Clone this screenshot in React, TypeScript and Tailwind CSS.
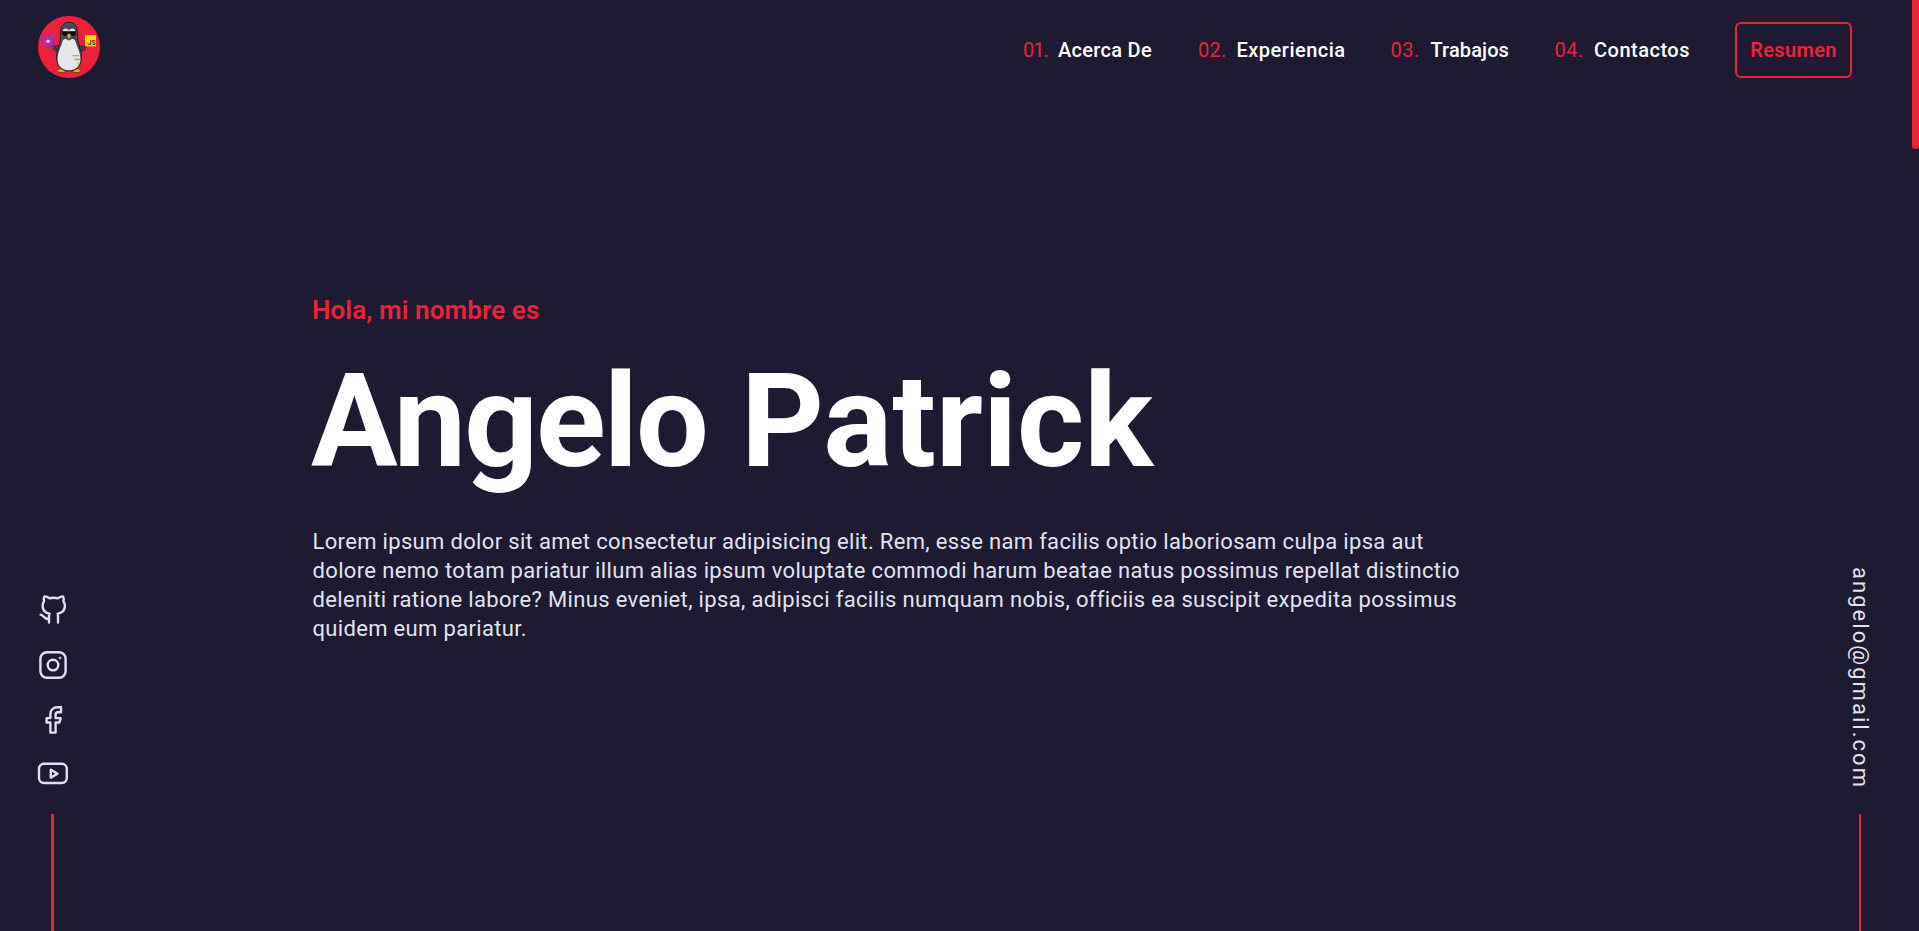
import React from "react";

const links = [
  { n: "01.", label: "Acerca De", num: "w-[36px] pl-px tracking-[-1px]", text: "tracking-[0.3px]" },
  { n: "02.", label: "Experiencia", num: "w-[38.5px] tracking-[0.3px]", text: "tracking-[0.5px]" },
  { n: "03.", label: "Trabajos", num: "w-[40px] tracking-[0.4px]", text: "tracking-[0.1px]" },
  { n: "04.", label: "Contactos", num: "w-[39.5px] tracking-[0.4px]", text: "tracking-[0.5px]" },
];

const paragraph = [
  { text: "Lorem ipsum dolor sit amet consectetur adipisicing elit. Rem, esse nam facilis optio laboriosam culpa ipsa aut", cls: "tracking-[0.333px]" },
  { text: "dolore nemo totam pariatur illum alias ipsum voluptate commodi harum beatae natus possimus repellat distinctio", cls: "tracking-[0.35px]" },
  { text: "deleniti ratione labore? Minus eveniet, ipsa, adipisci facilis numquam nobis, officiis ea suscipit expedita possimus", cls: "tracking-[0.342px]" },
  { text: "quidem eum pariatur.", cls: "tracking-[0.33px]" },
];

function Logo() {
  return (
    <svg className="h-[62px] w-[62px]" viewBox="0 0 62 62" fill="none">
      <circle cx="31" cy="31" r="31" fill="#ed213a" />
      <path d="M23 27C20 30.5 17 31 13.5 29.5L15.5 33.5C18.5 36 21 36 23 34.5Z" fill="#3f4147" stroke="#22232a" strokeWidth="0.8" />
      <path d="M39 27C42 30.5 45 31 48.5 29.5L47 33.5C44 36 41 36 39 34.5Z" fill="#3f4147" stroke="#22232a" strokeWidth="0.8" />
      <ellipse cx="23.6" cy="54.6" rx="4.4" ry="2" fill="#f5a524" stroke="#3b2a1a" strokeWidth="0.7" />
      <ellipse cx="38.4" cy="54.6" rx="4.4" ry="2" fill="#f5a524" stroke="#3b2a1a" strokeWidth="0.7" />
      <path d="M31 6.2C25.6 6.2 22.6 10.2 22.6 16C22.6 23 22 27 20.2 32C17 40 17.4 55 31 55C44.6 55 45 40 41.8 32C40 27 39.4 23 39.4 16C39.4 10.2 36.4 6.2 31 6.2Z" fill="#4a4c52" stroke="#22232a" strokeWidth="1" />
      <path d="M31 24.5C27.5 22 25.2 22.5 24.4 26C23.4 30 19.6 36 19.6 43C19.6 50.4 24 54.2 31 54.2C38 54.2 42.4 50.4 42.4 43C42.4 36 38.6 30 37.6 26C36.8 22.5 34.5 22 31 24.5Z" fill="#e7e7eb" />
      <path d="M24.5 15.8C25 11.8 29 11.6 31 14.5C33 11.6 37 11.8 37.5 15.8Z" fill="#e0e0e4" />
      <path d="M23.8 15.2H38.2L37.4 18.8C36 20.8 33.4 20.4 31.8 17.8H30.2C28.6 20.4 26 20.8 24.6 18.8Z" fill="#08080a" />
      <path d="M29 18.8L31 17.6L33 18.8L31.6 22.4H30.4Z" fill="#d9963a" />
      <g stroke="#8b35d6" strokeWidth="1.1">
        <ellipse cx="10" cy="25.3" rx="7.6" ry="3" />
        <ellipse cx="10" cy="25.3" rx="7.6" ry="3" transform="rotate(60 10 25.3)" />
        <ellipse cx="10" cy="25.3" rx="7.6" ry="3" transform="rotate(120 10 25.3)" />
      </g>
      <circle cx="10" cy="25.3" r="1.7" fill="#e9d8fb" />
      <rect x="47" y="19.2" width="11" height="11.2" fill="#fcd60a" />
      <text x="49.8" y="29.4" fontSize="6.8" fontWeight="700" fill="#3a3108" fontFamily="Roboto, sans-serif">JS</text>
      <path d="M34.5 39.7H41" stroke="#86a894" strokeWidth="1.2" />
      <path d="M36.5 43.4H42" stroke="#e8848a" strokeWidth="1.6" />
      <path d="M41 46L39.6 49" stroke="#d8b95a" strokeWidth="1.3" />
    </svg>
  );
}

function Icon({ children }: { children: React.ReactNode }) {
  return (
    <svg className="h-[34px] w-[34px] shrink-0" viewBox="0 0 34 34" fill="none" stroke="#e0e0ee" strokeWidth="2.4" strokeLinecap="round" strokeLinejoin="round">
      {children}
    </svg>
  );
}

export default function App() {
  return (
    <div className="relative flex h-[931px] w-full flex-col overflow-hidden bg-[#1d1a31] font-['Roboto',sans-serif] text-white">
      <header className="flex h-[100px] shrink-0 items-center justify-between pr-[67px] pl-[38px]">
        <div className="-mt-[6px]">
          <Logo />
        </div>
        <div className="flex items-center">
          <nav className="grid grid-cols-[176px_192.5px_164px_180.5px] text-[20px] leading-[28px]">
            {links.map((l) => (
              <a key={l.n} className="flex whitespace-nowrap">
                <span className={"shrink-0 font-normal text-[#ed213a] " + l.num}>{l.n}</span>
                <span className={"font-medium " + l.text}>{l.label}</span>
              </a>
            ))}
          </nav>
          <a className="flex h-[56px] w-[117px] items-center justify-center rounded-[6px] border-2 border-[#ed213a] text-[20px] leading-[28px] font-semibold tracking-[0.35px] text-[#ed213a]">
            Resumen
          </a>
        </div>
      </header>

      <div className="flex min-h-0 flex-1">
        <aside className="ml-[36px] flex w-[34px] flex-col justify-end">
          <div className="flex flex-col gap-[21px]">
            <Icon>
              <path d="M13 29.6V23.5C13 22.2 13 21.4 13.6 20.7C9 19.9 6.6 17 6.6 13C6.6 11.2 7.2 9.4 8.1 8.2C7.6 6.6 7.7 4.9 8.5 3.4C10.5 3.4 12 4.1 13.7 5.3C16.2 4.7 19.4 4.7 21.9 5.3C23.6 4.1 25.1 3.4 27.1 3.4C27.8 4.9 27.9 6.6 27.4 8.2C28.4 9.4 28.9 11.2 28.9 13C28.9 17 26.5 19.9 21.6 20.7C22 21.4 22 22.2 22 23.5V29.6M4.6 21.6C8 22 7.8 26.6 13 26" />
            </Icon>
            <Icon>
              <rect x="4.4" y="4.2" width="25.2" height="25.6" rx="6.5" />
              <circle cx="17" cy="17.1" r="5.3" />
              <circle cx="24" cy="10.1" r="0.4" strokeWidth="2" />
            </Icon>
            <Icon>
              <path d="M25 4.2H21.5C17.4 4.2 14.4 7 14.4 11V15.1H10.6V19.5H14.4V29.6H19.6V19.5H23.4L24.7 15.1H19.6V11.4C19.6 10 20.4 9.2 21.8 9.2H25Z" />
            </Icon>
            <Icon>
              <rect x="3" y="5.8" width="27.8" height="19.2" rx="5" />
              <path d="M14.8 11.8L21.5 15.7L14.8 19.6Z" />
            </Icon>
          </div>
          <div className="mt-[22px] ml-[15px] h-[117px] w-[3px] bg-[#ed213a]" />
        </aside>

        <main className="ml-[242px] flex-1 pt-[195px]">
          <p className="text-[26px] leading-[31px] font-semibold tracking-[0.1px] text-[#ed213a]">Hola, mi nombre es</p>
          <h1 className="mt-[31px] -ml-px flex text-[129px] leading-[129px] font-bold whitespace-nowrap">
            <span className="w-[430px] tracking-[-1.9px]">Angelo</span>
            <span className="tracking-[-0.1px]">Patrick</span>
          </h1>
          <div className="mt-[41px] text-[22px] leading-[29px] text-[#e2e2f0]">
            {paragraph.map((l) => (
              <p key={l.text} className={"pl-[0.5px] whitespace-nowrap " + l.cls}>
                {l.text}
              </p>
            ))}
          </div>
        </main>

        <aside className="mr-[42px] flex w-[34px] flex-col items-center justify-end">
          <a className="h-[220px] text-[22px] leading-[34px] tracking-[2.05px] whitespace-nowrap text-[#e2e2f0] [writing-mode:vertical-rl]">
            angelo@gmail.com
          </a>
          <div className="mt-[27px] h-[117px] w-[2px] bg-[#ed213a]" />
        </aside>
      </div>

      <div className="absolute top-0 right-0 h-[149px] w-[7px] rounded-b-[4px] bg-[#ed213a]" />
    </div>
  );
}
